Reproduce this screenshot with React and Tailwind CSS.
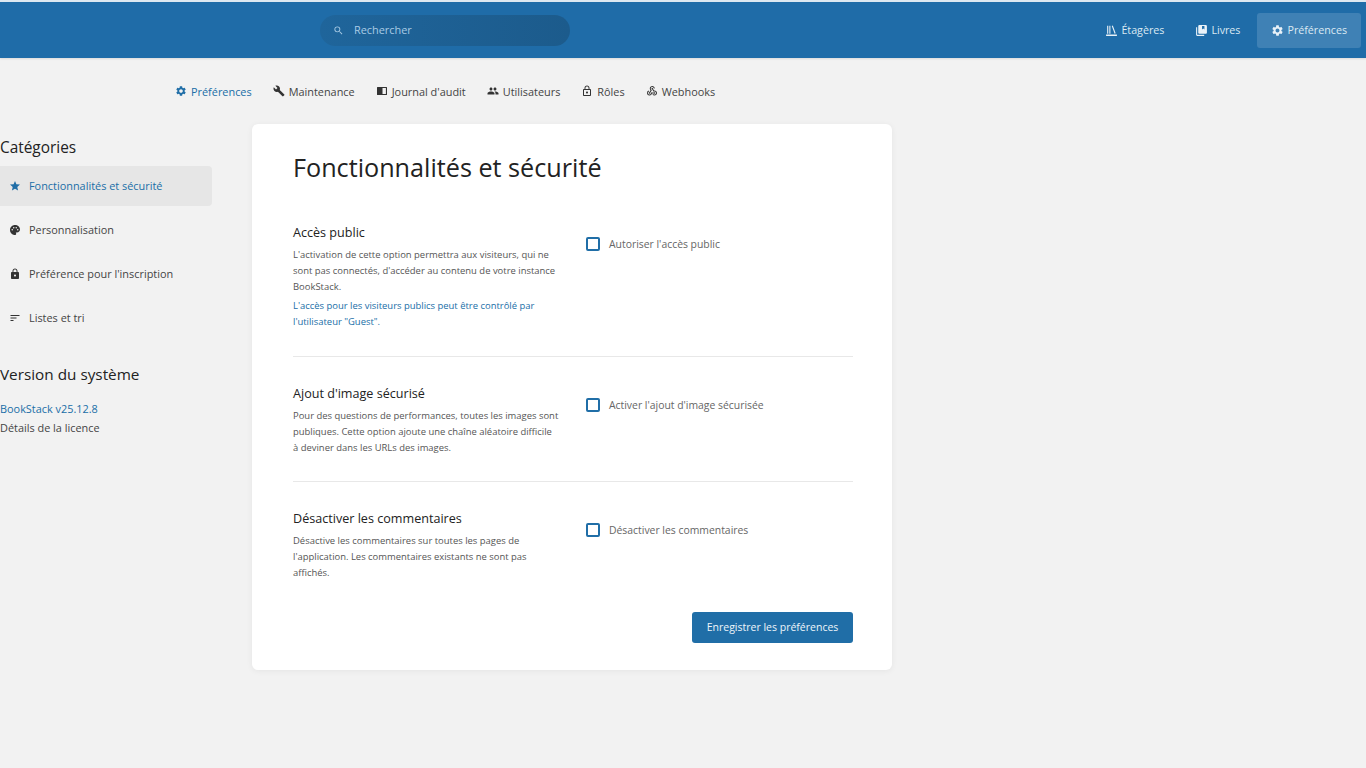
import React from "react";
import { MdSearch, MdSettings, MdBuild, MdPeople, MdLockOutline, MdWebhook, MdStar, MdPalette, MdLock, MdSort } from "react-icons/md";

const Shelf = ({ className }) => (
  <svg viewBox="0 0 24 24" className={className} fill="currentColor">
    <path d="M4 3h2v15H4zM8 3h2v15H8zM12.500 3.600l1.900-.7 5.300 14.400-1.900.7zM2 19.500h20V22H2z" />
  </svg>
);
const Books = ({ className }) => (
  <svg viewBox="0 0 24 24" className={className} fill="currentColor">
    <path d="M2 6h2v14h13v2H4a2 2 0 0 1-2-2zM8 2h12a2 2 0 0 1 2 2v12a2 2 0 0 1-2 2H8a2 2 0 0 1-2-2V4a2 2 0 0 1 2-2zm5 1.500V10l2.200-1.500L17.400 10V3.500z" />
  </svg>
);
const AuditBook = ({ className }) => (
  <svg viewBox="0 0 24 24" className={className} fill="currentColor">
    <path d="M3 4h18a1 1 0 0 1 1 1v14a1 1 0 0 1-1 1H3a1 1 0 0 1-1-1V5a1 1 0 0 1 1-1zm10 2.200v11.600h6.800V6.200z" />
  </svg>
);

function TopLink({ icon: Icon, label, active }) {
  return (
    <div className={`flex h-[35px] items-center gap-[3px] rounded-[3px] px-[14px] ${active ? "bg-[#3f81b5]" : ""}`}>
      <Icon className="h-[13px] w-[13px] text-[#eaf2f8]" />
      <span className="text-[10.7px] text-[#dbe9f3]">{label}</span>
    </div>
  );
}

function Tab({ icon: Icon, label, active }) {
  return (
    <div className={`flex items-center gap-[4px] ${active ? "text-[#206ea7]" : "text-[#444444]"}`}>
      <Icon className={`h-[12px] w-[12px] ${active ? "text-[#206ea7]" : "text-[#333333]"}`} />
      <span className="mt-[1px] text-[10.9px] leading-[18px]">{label}</span>
    </div>
  );
}

function Cat({ icon: Icon, label, active }) {
  return (
    <div className={`flex h-[40px] w-[212px] items-center gap-[8px] rounded-r-[4px] pl-[9px] ${active ? "bg-[#e6e6e6] text-[#206ea7]" : "text-[#444444]"}`}>
      <Icon className={`h-[12px] w-[12px] ${active ? "text-[#206ea7]" : "text-[#333333]"}`} />
      <span className="mt-[1px] text-[10.9px]">{label}</span>
    </div>
  );
}

function Setting({ title, lines, link, check }) {
  return (
    <div className="flex">
      <div className="w-[293px] pt-[1px]">
        <h3 className="text-[12.6px] leading-[18px] text-[#222222]">{title}</h3>
        <div className="mt-[5px] w-[270px] text-[9.45px] leading-[16px] text-[#555555]">
          {lines.map((l) => <div key={l} className="whitespace-nowrap">{l}</div>)}
        </div>
        {link && (
          <div className="mt-[3px] text-[9.45px] leading-[16px] text-[#206ea7]">
            {link.map((l) => <div key={l} className="whitespace-nowrap">{l}</div>)}
          </div>
        )}
      </div>
      <div className="mt-[13px] flex h-[16px] items-center gap-[9px]">
        <div className="h-[14px] w-[14px] rounded-[2px] border-2 border-[#206ea7] bg-white" />
        <span className="mt-[1px] text-[10.4px] text-[#666666]">{check}</span>
      </div>
    </div>
  );
}

export default function App() {
  return (
    <div className="min-h-[768px] bg-[#f2f2f2]" style={{ fontFamily: '"Open Sans", "Noto Sans", sans-serif' }}>
      <header className="flex h-[58px] items-center border-t-2 border-[#dce8f1] bg-[#1f6ca8] pl-[320px] pr-[5px] shadow-[0_1px_2px_rgba(0,0,0,0.1)]">
        <div className="flex h-[31px] w-[250px] items-center rounded-full bg-gradient-to-r from-[#1f659b] to-[#1c5b8c] pl-[13px]">
          <MdSearch className="h-[11px] w-[11px] text-[#a9cbe5]" />
          <span className="ml-[10px] text-[10.9px] text-[#a9cbe5]">Rechercher</span>
        </div>
        <nav className="ml-auto flex items-center gap-[3px]">
          <TopLink icon={Shelf} label="Étagères" />
          <TopLink icon={Books} label="Livres" />
          <TopLink icon={MdSettings} label="Préférences" active />
        </nav>
      </header>

      <nav className="flex h-[66px] items-center gap-[21px] pl-[175px]">
        <Tab icon={MdSettings} label="Préférences" active />
        <Tab icon={MdBuild} label="Maintenance" />
        <Tab icon={AuditBook} label="Journal d'audit" />
        <Tab icon={MdPeople} label="Utilisateurs" />
        <Tab icon={MdLockOutline} label="Rôles" />
        <Tab icon={MdWebhook} label="Webhooks" />
      </nav>

      <div className="flex">
        <aside className="w-[252px]">
          <h5 className="mt-[14px] text-[15.4px] leading-[20px] text-[#222222]">Catégories</h5>
          <div className="mt-[8px] flex flex-col gap-[4px]">
            <Cat icon={MdStar} label="Fonctionnalités et sécurité" active />
            <Cat icon={MdPalette} label="Personnalisation" />
            <Cat icon={MdLock} label="Préférence pour l'inscription" />
            <Cat icon={MdSort} label="Listes et tri" />
          </div>
          <h5 className="mt-[26px] text-[15.3px] leading-[20px] text-[#222222]">Version du système</h5>
          <div className="mt-[15px] text-[10.9px] leading-[19px] text-[#444444]">
            <div className="text-[#206ea7]">BookStack v25.12.8</div>
            <div>Détails de la licence</div>
          </div>
        </aside>

        <main className="h-[546px] w-[640px] rounded-[6px] bg-white pl-[41px] pr-[39px] pt-[25px] shadow-[0_1px_6px_rgba(0,0,0,0.06)]">
          <h1 className="text-[25.2px] leading-[36px] text-[#222222]">Fonctionnalités et sécurité</h1>
          <div className="mt-[38px] border-b border-[#e8e8e8] pb-[26px]">
            <Setting
              title="Accès public"
              lines={["L'activation de cette option permettra aux visiteurs, qui ne", "sont pas connectés, d'accéder au contenu de votre instance", "BookStack."]}
              link={["L'accès pour les visiteurs publics peut être contrôlé par", "l'utilisateur \"Guest\"."]}
              check="Autoriser l'accès public"
            />
          </div>
          <div className="mt-[27px] border-b border-[#e8e8e8] pb-[25px]">
            <Setting
              title="Ajout d'image sécurisé"
              lines={["Pour des questions de performances, toutes les images sont", "publiques. Cette option ajoute une chaîne aléatoire difficile", "à deviner dans les URLs des images."]}
              check="Activer l'ajout d'image sécurisée"
            />
          </div>
          <div className="mt-[27px]">
            <Setting
              title="Désactiver les commentaires"
              lines={["Désactive les commentaires sur toutes les pages de", "l'application. Les commentaires existants ne sont pas", "affichés."]}
              check="Désactiver les commentaires"
            />
          </div>
          <div className="mt-[31px] flex justify-end">
            <button className="h-[31px] w-[161px] rounded-[3px] bg-[#206ea7] text-[10.5px] text-[#eef5fa]">Enregistrer les préférences</button>
          </div>
        </main>
      </div>
    </div>
  );
}
